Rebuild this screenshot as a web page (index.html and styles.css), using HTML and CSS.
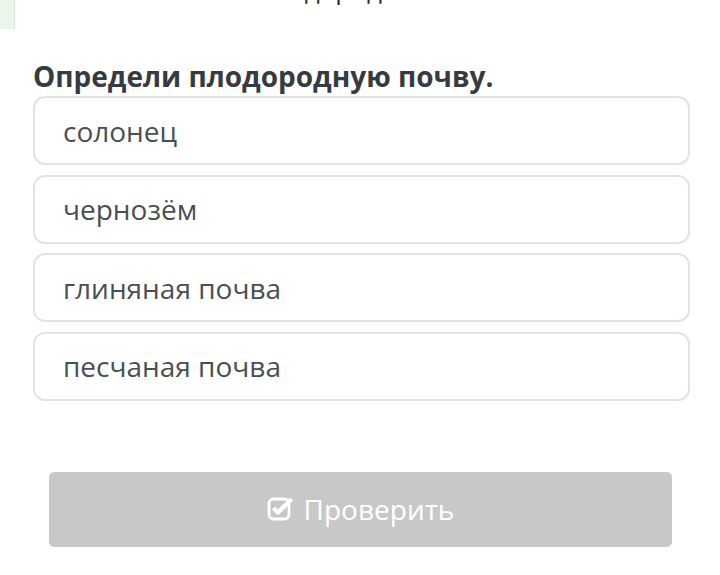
FILE: index.html
```html
<!DOCTYPE html>
<html lang="ru">
<head>
    <meta charset="UTF-8">
    <meta name="viewport" content="width=device-width, initial-scale=1.0">
    <title>Вопрос</title>
    <link rel="stylesheet" href="styles.css">
</head>
<body>

<div class="page">
    <div class="prev-line">
        <div class="prev-mark"></div>
        <div class="prev-clip">
            <p class="prev-text">Что же влияет на <span class="prev-dark">плодородие</span> почв</p>
        </div>
    </div>

    <div class="question">
        <h2 class="question-title">Определи плодородную почву.</h2>
        <div class="options">
            <div class="option">солонец</div>
            <div class="option">чернозём</div>
            <div class="option">глиняная почва</div>
            <div class="option">песчаная почва</div>
        </div>
    </div>

    <div class="actions">
        <button class="check-button" disabled>
            <svg class="check-icon" viewBox="0 0 28 26" width="28" height="26">
                <rect x="2" y="4" width="20" height="20" rx="4.5" fill="none" stroke="#fff" stroke-width="2.8"/>
                <path d="M6.5 13 L11 17.5 L24.5 4" fill="none" stroke="#fff" stroke-width="4.4" stroke-linejoin="round"/>
            </svg>
            Проверить
        </button>
    </div>
</div>

</body>
</html>
```

FILE: styles.css
```css
body {
    font-family: "Open Sans", "Noto Sans", Arial, sans-serif;
    margin: 0;
    background-color: white;
}
.page {
    width: 720px;
    height: 575px;
    overflow: hidden;
}
.prev-line {
    display: flex;
    height: 30px;
}
.prev-mark {
    width: 14px;
    height: 29px;
    background-color: #eaf6ea;
    border-right: 1px solid #d8eed8;
}
.prev-clip {
    height: 5px;
    overflow: hidden;
    margin-left: 18px;
}
.prev-text {
    margin: -26px 0 0 0;
    font-size: 26px;
    line-height: 30px;
    color: #dcdcdc;
    white-space: nowrap;
}
.prev-dark {
    color: #2e2e2e;
}
.question {
    padding: 30px 30px 0 33px;
}
.question-title {
    margin: 0 0 4px 0;
    font-size: 28px;
    line-height: 32px;
    font-weight: bold;
    color: #353b41;
}
.options {
    display: flex;
    flex-direction: column;
    gap: 9.5px;
}
.option {
    height: 65px;
    padding: 0 28px;
    border: 2px solid #e1e4e4;
    border-radius: 12px;
    display: flex;
    align-items: center;
    font-size: 28px;
    color: #4a4f54;
}
.actions {
    padding: 71px 48px 0 49px;
}
.check-button {
    width: 623px;
    height: 75px;
    border: none;
    border-radius: 5px;
    background-color: #c8c8c8;
    color: white;
    font-family: "Open Sans", "Noto Sans", Arial, sans-serif;
    font-size: 28px;
    display: flex;
    justify-content: center;
    align-items: center;
    gap: 9px;
}
.check-icon {
    margin-top: -3px;
}
```
